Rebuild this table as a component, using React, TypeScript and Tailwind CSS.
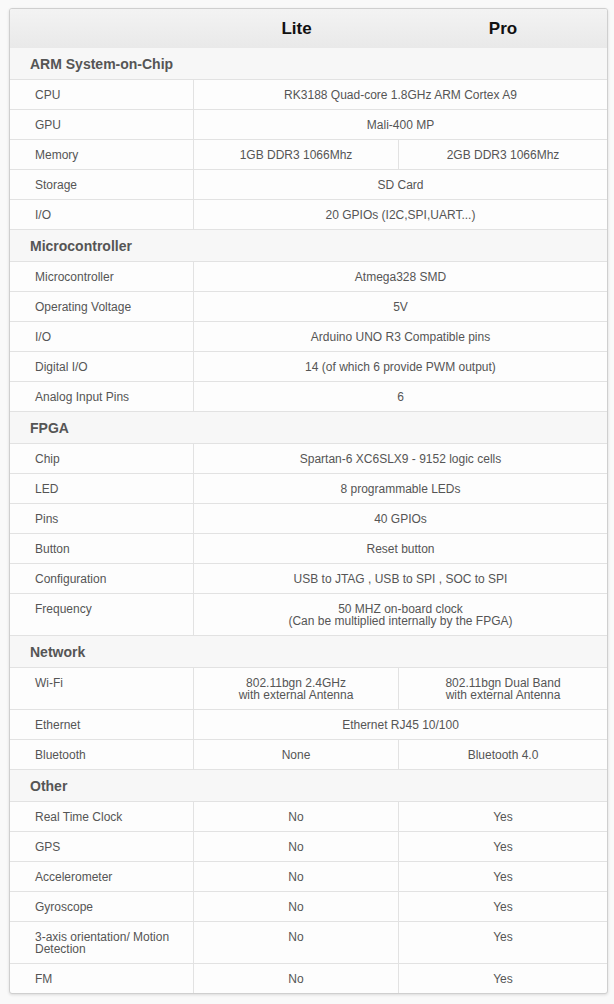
import React from "react";

type Row = { label: string; all?: string[]; lite?: string[]; pro?: string[] };
type Section = { title: string; rows: Row[] };

const data: Section[] = [
  {
    title: "ARM System-on-Chip",
    rows: [
      { label: "CPU", all: ["RK3188 Quad-core 1.8GHz ARM Cortex A9"] },
      { label: "GPU", all: ["Mali-400 MP"] },
      { label: "Memory", lite: ["1GB DDR3 1066Mhz"], pro: ["2GB DDR3 1066Mhz"] },
      { label: "Storage", all: ["SD Card"] },
      { label: "I/O", all: ["20 GPIOs (I2C,SPI,UART...)"] },
    ],
  },
  {
    title: "Microcontroller",
    rows: [
      { label: "Microcontroller", all: ["Atmega328 SMD"] },
      { label: "Operating Voltage", all: ["5V"] },
      { label: "I/O", all: ["Arduino UNO R3 Compatible pins"] },
      { label: "Digital I/O", all: ["14 (of which 6 provide PWM output)"] },
      { label: "Analog Input Pins", all: ["6"] },
    ],
  },
  {
    title: "FPGA",
    rows: [
      { label: "Chip", all: ["Spartan-6 XC6SLX9 - 9152 logic cells"] },
      { label: "LED", all: ["8 programmable LEDs"] },
      { label: "Pins", all: ["40 GPIOs"] },
      { label: "Button", all: ["Reset button"] },
      { label: "Configuration", all: ["USB to JTAG , USB to SPI , SOC to SPI"] },
      {
        label: "Frequency",
        all: ["50 MHZ on-board clock", "(Can be multiplied internally by the FPGA)"],
      },
    ],
  },
  {
    title: "Network",
    rows: [
      {
        label: "Wi-Fi",
        lite: ["802.11bgn 2.4GHz", "with external Antenna"],
        pro: ["802.11bgn Dual Band", "with external Antenna"],
      },
      { label: "Ethernet", all: ["Ethernet RJ45 10/100"] },
      { label: "Bluetooth", lite: ["None"], pro: ["Bluetooth 4.0"] },
    ],
  },
  {
    title: "Other",
    rows: [
      { label: "Real Time Clock", lite: ["No"], pro: ["Yes"] },
      { label: "GPS", lite: ["No"], pro: ["Yes"] },
      { label: "Accelerometer", lite: ["No"], pro: ["Yes"] },
      { label: "Gyroscope", lite: ["No"], pro: ["Yes"] },
      { label: "3-axis orientation/ Motion Detection", lite: ["No"], pro: ["Yes"] },
      { label: "FM", lite: ["No"], pro: ["Yes"] },
    ],
  },
];

function Lines({ lines }: { lines: string[] }) {
  return (
    <>
      {lines.map((l, i) => (
        <div key={i}>{l}</div>
      ))}
    </>
  );
}

export default function App() {
  return (
    <div
      className="min-h-[1004px] w-[614px] bg-[#f9f9f9] pt-[8px] pl-[9px]"
      style={{ fontFamily: '"Liberation Sans", Arial, sans-serif' }}
    >
      <div className="w-[599px] overflow-hidden rounded-[3px] border border-[#cfcfcf] bg-[#fdfdfd] shadow-[0_1px_3px_rgba(0,0,0,0.12)]">
        {/* Header */}
        <div className="grid h-[39px] grid-cols-[184px_205px_1fr] items-center bg-gradient-to-b from-[#f3f3f3] to-[#e9e9e9] text-[17px] font-bold text-[#111]">
          <div />
          <div className="text-center">Lite</div>
          <div className="text-center">Pro</div>
        </div>
        {data.map((section, si) => (
          <div key={section.title}>
            <div className="border-b border-[#e2e2e2] bg-[#f7f7f7] pt-[1px] pl-[20px] text-[14px] leading-[30px] font-bold text-[#555]">
              {section.title}
            </div>
            {section.rows.map((row, ri) => {
              const last = si === data.length - 1 && ri === section.rows.length - 1;
              return (
                <div
                  key={row.label + ri}
                  className={`grid grid-cols-[184px_205px_1fr] text-[12px] leading-[12px] text-[#555] ${
                    last ? "" : "border-b border-[#e2e2e2]"
                  }`}
                >
                  <div className="border-r border-[#e2e2e2] pt-[9px] pb-[8px] pl-[25px] pr-[10px]">
                    {row.label}
                  </div>
                  {row.all ? (
                    <div className="col-span-2 pt-[9px] pb-[8px] text-center">
                      <Lines lines={row.all} />
                    </div>
                  ) : (
                    <>
                      <div className="border-r border-[#e2e2e2] pt-[9px] pb-[8px] text-center">
                        <Lines lines={row.lite || []} />
                      </div>
                      <div className="pt-[9px] pb-[8px] text-center">
                        <Lines lines={row.pro || []} />
                      </div>
                    </>
                  )}
                </div>
              );
            })}
          </div>
        ))}
      </div>
    </div>
  );
}
